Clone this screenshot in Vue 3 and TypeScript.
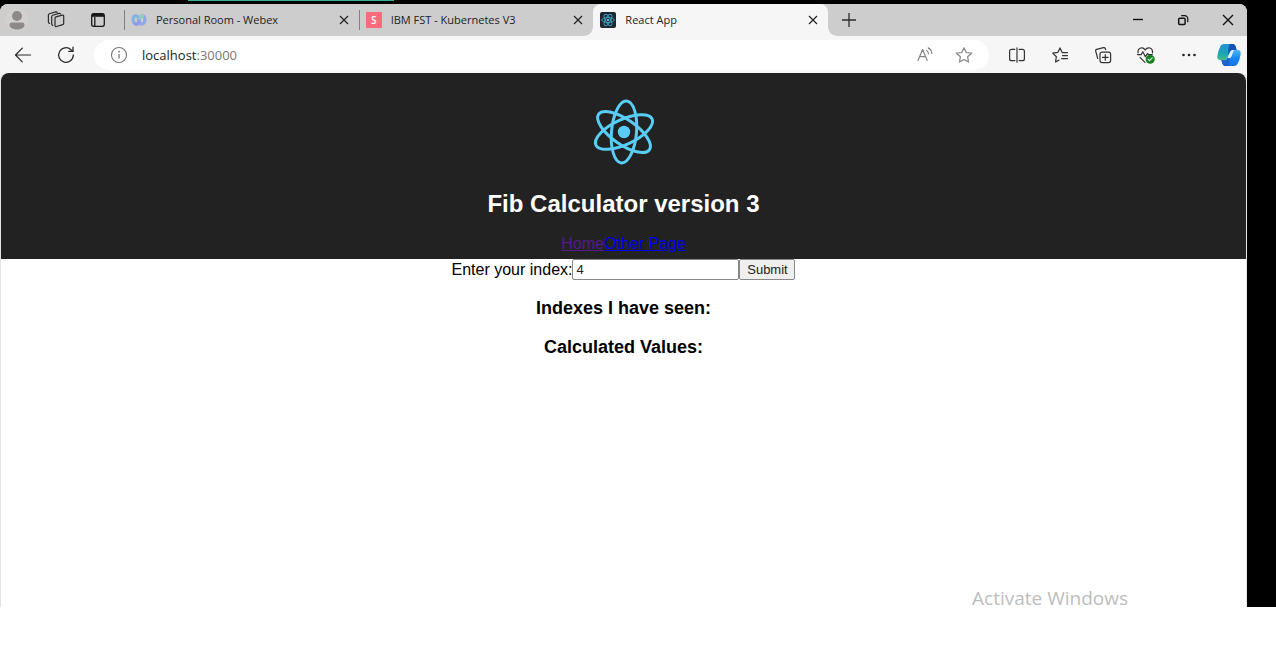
<script setup lang="ts">
import { ref } from 'vue'

interface Tab {
  title: string
  icon: 'webex' | 'skills' | 'react'
  active: boolean
}

const tabs: Tab[] = [
  { title: 'Personal Room - Webex', icon: 'webex', active: false },
  { title: 'IBM FST - Kubernetes V3', icon: 'skills', active: false },
  { title: 'React App', icon: 'react', active: true },
]

const index = ref('4')
</script>

<template>
  <div class="screen">
    <div class="share-bar"><span class="share-accent"></span></div>
    <div class="browser">
      <header class="tab-strip">
        <button class="avatar" aria-label="Profile">
          <svg width="22" height="22" viewBox="0 0 22 22">
            <circle cx="11" cy="11" r="11" fill="#d3d1d0" />
            <circle cx="11" cy="7" r="5" fill="#8d8988" />
            <path d="M3.500 16q0-2.500 2.500-2.500h10q2.500 0 2.500 2.500c0 3-4 4.500-7.500 4.500s-7.500-1.500-7.500-4.500z" fill="#8d8988" />
          </svg>
        </button>
        <button class="workspaces" aria-label="Workspaces">
          <svg width="18" height="18" viewBox="0 0 18 18" fill="none" stroke="#2b2b2b" stroke-width="1.2" stroke-linejoin="round" stroke-linecap="round">
            <path d="M8 7.200q0-1 1-1.300l6.200-1.700q1.500-.3 1.500 1.100v7q0 1-1 1.300l-6.200 1.900q-1.500.4-1.500-1z" />
            <path d="M5.800 14.300Q4.700 14 4.700 13V5.600q0-1.100 1-1.400l6.300-1.800q1-.2 1.500.4" />
            <path d="M2.500 12.500Q1.400 12.100 1.400 11V4.100q0-1.100 1-1.400l6.300-1.800q1-.2 1.500.4" />
          </svg>
        </button>
        <button class="tab-actions" aria-label="Tab actions">
          <svg width="16" height="16" viewBox="0 0 16 16" fill="none" stroke="#181818" stroke-width="1.3">
            <rect x="1.7" y="1.7" width="12.600" height="12.600" rx="2" />
            <path d="M2 3.300h12" stroke-width="3" />
            <path d="M4.800 5v9" />
          </svg>
        </button>

        <nav class="tabs" aria-label="Tabs">
          <div v-for="tab in tabs" :key="tab.title" class="tab" :class="{ active: tab.active }">
            <svg v-if="tab.icon === 'webex'" class="favicon" viewBox="0 0 16 16" fill="none" stroke-width="3.200" stroke-linecap="round">
              <ellipse cx="11" cy="8" rx="2.900" ry="4.200" stroke="#8fa8ea" transform="rotate(10 11 8)" />
              <ellipse cx="5" cy="8" rx="2.900" ry="4.200" stroke="#84b0e6" transform="rotate(-10 5 8)" />
              <path d="M9 6c.6-1.700 1.500-2.400 2.600-2.200" stroke="#8ed0b8" />
              <path d="M4 11.500c1.600 1.200 3 .6 3.800-1.700" stroke="#9299e6" />
            </svg>
            <span v-else-if="tab.icon === 'skills'" class="favicon skills">S</span>
            <svg v-else class="favicon" viewBox="0 0 16 16" fill="none" stroke="#3d9cbb">
              <rect width="16" height="16" rx="2" fill="#20252e" stroke="none" />
              <ellipse cx="8" cy="8" rx="6.300" ry="2.500" />
              <ellipse cx="8" cy="8" rx="6.300" ry="2.500" transform="rotate(60 8 8)" />
              <ellipse cx="8" cy="8" rx="6.300" ry="2.500" transform="rotate(120 8 8)" />
              <circle cx="8" cy="8" r="1.300" fill="#4fb6d4" stroke="none" />
            </svg>
            <span class="tab-title">{{ tab.title }}</span>
            <button class="tab-close" :aria-label="`Close ${tab.title}`">
              <svg width="10" height="10" viewBox="0 0 10 10"><path d="M1 1l8 8M9 1l-8 8" stroke="#222" stroke-width="1.2" /></svg>
            </button>
          </div>
        </nav>
        <button class="new-tab" aria-label="New tab">
          <svg width="14" height="14" viewBox="0 0 14 14"><path d="M7 0v14M0 7h14" stroke="#2b2b2b" stroke-width="1.3" /></svg>
        </button>

        <div class="window-controls">
          <button aria-label="Minimize">
            <svg width="12" height="12" viewBox="0 0 12 12"><path d="M1 5.500h10" stroke="#111" stroke-width="1.4" /></svg>
          </button>
          <button aria-label="Restore">
            <svg width="12" height="12" viewBox="0 0 12 12" fill="none" stroke="#111" stroke-width="1.5">
              <rect x="1.700" y="4.200" width="6.400" height="6.400" rx="1" />
              <path d="M4.200 1.700h3.600a3 3 0 0 1 3 3v3.600" stroke-width="1.2" />
            </svg>
          </button>
          <button aria-label="Close">
            <svg width="12" height="12" viewBox="0 0 12 12"><path d="M1 1l10 10M11 1l-10 10" stroke="#111" stroke-width="1.4" /></svg>
          </button>
        </div>
      </header>

      <div class="toolbar">
        <button class="tool" aria-label="Back">
          <svg width="18" height="18" viewBox="0 0 18 18" fill="none" stroke="#2b2b2b" stroke-width="1.2" stroke-linecap="round" stroke-linejoin="round">
            <path d="M16.500 9H1.500M8.300 2.200 1.500 9l6.800 6.800" />
          </svg>
        </button>
        <button class="tool" aria-label="Refresh">
          <svg width="18" height="18" viewBox="0 0 18 18" fill="none" stroke="#2b2b2b" stroke-width="1.3" stroke-linecap="round" stroke-linejoin="round">
            <path d="M16.300 9A7.300 7.300 0 1 1 14 3.700L15.700 5.200" />
            <path d="M16 1.200v4.200h-4.200" />
          </svg>
        </button>
        <div class="address-bar">
          <svg class="info" width="18" height="18" viewBox="0 0 18 18" fill="none" stroke="#777" stroke-width="1.1">
            <circle cx="9" cy="9" r="7.500" />
            <path d="M9 8v4.500" stroke-width="1.3" />
            <circle cx="9" cy="5.700" r=".9" fill="#777" stroke="none" />
          </svg>
          <span class="url">localhost<span class="port">:30000</span></span>
          <button class="tool" aria-label="Read aloud">
            <svg width="18" height="18" viewBox="0 0 18 18" fill="none" stroke="#858585" stroke-width="1.2" stroke-linecap="round" stroke-linejoin="round">
              <path d="M2 14.500 6.600 3.500 11.200 14.500M3.600 10.700h6" />
              <path d="M10.500 4.600q1.800 1 2 3.200M12.200 1.900q3.300 1.700 3.600 5.600" />
            </svg>
          </button>
          <button class="tool" aria-label="Add to favorites">
            <svg width="18" height="18" viewBox="0 0 18 18" fill="none" stroke="#858585" stroke-width="1.2" stroke-linejoin="round">
              <path d="M9 1.800 11.200 6.500 16.500 7.200 12.600 10.800 13.600 16.100 9 13.500 4.400 16.100 5.400 10.800 1.500 7.200 6.800 6.500z" />
            </svg>
          </button>
        </div>
        <div class="tools">
          <button class="tool" aria-label="Split screen">
            <svg width="18" height="18" viewBox="0 0 18 18" fill="none" stroke="#333" stroke-width="1.2" stroke-linecap="round">
              <path d="M6.800 3.300H3.600a2 2 0 0 0-2 2v7.400a2 2 0 0 0 2 2h3.200M11.200 3.300h3.200a2 2 0 0 1 2 2v7.400a2 2 0 0 1-2 2h-3.200M9 1.800v14.400" />
            </svg>
          </button>
          <button class="tool" aria-label="Favorites">
            <svg width="18" height="18" viewBox="0 0 18 18" fill="none" stroke="#333" stroke-width="1.2" stroke-linecap="round" stroke-linejoin="round">
              <path d="M16.500 6.600h-5.300L9 1.900 6.800 6.400 1.700 7.100 5.400 10.700 4.500 16 8 14.100" />
              <path d="M11.500 9.600h5M10.500 12.600h6" />
            </svg>
          </button>
          <button class="tool" aria-label="Collections">
            <svg width="18" height="18" viewBox="0 0 18 18" fill="none" stroke="#333" stroke-width="1.2" stroke-linecap="round" stroke-linejoin="round">
              <path d="M3.700 12.500 1.700 5.200q-.4-1.400 1-1.800l6.800-1.800q1.300-.3 1.800.9l.3 1.200" />
              <rect x="6" y="6.200" width="10.600" height="10.400" rx="2" />
              <path d="M11.300 8.600v5.600M8.500 11.400h5.600" />
            </svg>
          </button>
          <button class="tool" aria-label="Browser essentials">
            <svg width="20" height="18" viewBox="0 0 20 18" fill="none" stroke="#333" stroke-width="1.2" stroke-linecap="round" stroke-linejoin="round">
              <path d="M2 6.800C1.700 1.400 7 .4 9.200 4 11.500.3 17 1.500 16.500 6.800" />
              <path d="M1.500 8.600h3.700l1.600-2.800 2.600 5 2-3.200 1.300 1h3.500M4 11.300l5 5" />
              <circle cx="14.200" cy="13.200" r="4.500" fill="#15801f" stroke="none" />
              <path d="m12.200 13.400 1.300 1.300 2.800-2.800" stroke="#d8f0d8" />
            </svg>
          </button>
          <button class="tool" aria-label="Settings and more">
            <svg width="18" height="18" viewBox="0 0 18 18" fill="#222"><circle cx="3.500" cy="9" r="1.300" /><circle cx="9" cy="9" r="1.300" /><circle cx="14.500" cy="9" r="1.300" /></svg>
          </button>
        </div>
        <button class="copilot" aria-label="Copilot">
          <svg width="24" height="22" viewBox="0 0 24 22">
            <defs>
              <linearGradient id="leaf-left" x1="0" y1="0" x2="0" y2="1">
                <stop offset="0" stop-color="#2590d4" /><stop offset=".6" stop-color="#1ba5b8" /><stop offset="1" stop-color="#46bd86" />
              </linearGradient>
              <linearGradient id="leaf-right" x1="0" y1="0" x2="0" y2="1">
                <stop offset="0" stop-color="#4db5f5" /><stop offset=".5" stop-color="#1688f4" /><stop offset="1" stop-color="#1673dc" />
              </linearGradient>
            </defs>
            <path d="M7 0h9q2 .2 2.700 2.600L19.600 6h-3.800q-2.200.1-2.900 2.300L10.700 14q-.8 2.200-3 2.200H3.200Q0 15.900.3 12.300 1.300 6 3.400 2.300 4.600 0 7 0z" fill="url(#leaf-left)" />
            <path d="M12.500 0H16q2 .2 2.700 2.600L19.600 6h-3.800q-2.200.1-2.900 2.300L11.800 11q-1.300-4.500.7-11z" fill="#1552b5" />
            <path d="M17 22H8q-2-.2-2.700-2.600l-.9-3.200h3.300q2.200 0 3-2.200h1.600q1.700-.2 2.400-2.300L16.500 6h4.300q3.200.3 2.900 3.900-1 6.300-3.100 9.900Q19.400 22 17 22z" fill="url(#leaf-right)" />
            <path d="M11.500 22H8q-2-.2-2.700-2.600l-.9-3.200h3.300q2.200 0 3-2.200h1.600q1.200 4-.8 8z" fill="#1a62cf" />
            <path d="M13 8.300q.7-2 2.800-2.300h1L14.500 12.100q-.7 1.800-2.300 1.900h-1.500z" fill="#e2eefa" />
          </svg>
        </button>
      </div>

      <main class="page">
        <div class="app-header">
          <svg class="logo" viewBox="0 0 80 80" fill="none" stroke="#58cdf5" stroke-width="3" role="img" aria-label="React logo">
            <g transform="rotate(5 40 40)">
              <ellipse cx="40" cy="40" rx="12.500" ry="31" />
              <ellipse cx="40" cy="40" rx="12.500" ry="31" transform="rotate(60 40 40)" />
              <ellipse cx="40" cy="40" rx="12.500" ry="31" transform="rotate(120 40 40)" />
            </g>
            <circle cx="40" cy="40" r="6.200" fill="#58cdf5" stroke="none" />
          </svg>
          <h1>Fib Calculator version 3</h1>
          <nav class="links"><a class="visited" href="#home">Home</a><a href="#other">Other Page</a></nav>
        </div>
        <form class="index-form" @submit.prevent>
          <label for="index">Enter your index:</label>
          <input id="index" v-model="index" type="text" />
          <button type="submit">Submit</button>
        </form>
        <h3>Indexes I have seen:</h3>
        <h3>Calculated Values:</h3>
        <p class="watermark">Activate Windows</p>
      </main>
    </div>
  </div>
</template>

<style>
body {
  margin: 0;
  background: #fff;
}
</style>

<style scoped>
.screen {
  box-sizing: border-box;
  min-height: calc(100vh - 41px);
  padding-right: 29px;
  display: flex;
  flex-direction: column;
  background: #000;
  font-family: "Open Sans", "Noto Sans", sans-serif;
}
.share-bar {
  height: 4px;
  padding-left: 188px;
}
.share-accent {
  display: block;
  width: 206px;
  height: 1px;
  background: #35b292;
}
.browser {
  flex: 1;
  display: flex;
  flex-direction: column;
  background: #f6f6f6;
  border-radius: 8px 8px 0 0;
}
button {
  font: inherit;
}
.tab-strip button,
.toolbar button {
  display: flex;
  align-items: center;
  justify-content: center;
  flex: none;
  padding: 0;
  border: 0;
  background: none;
}
.tab-strip {
  display: flex;
  align-items: center;
  height: 32px;
  border-radius: 8px 8px 0 0;
  background: #cdcdcd;
}
.avatar {
  width: 34px;
}
.workspaces {
  width: 44px;
}
.tab-actions {
  width: 40px;
}
.tabs {
  display: flex;
  flex: 0 1 704px;
  margin-left: 6px;
  align-self: stretch;
}
.tab {
  position: relative;
  box-sizing: border-box;
  flex: 1;
  min-width: 0;
  display: flex;
  align-items: center;
  padding: 0 10px 0 7px;
  font-size: 11px;
  line-height: 16px;
  color: #222;
}
.tab:not(.active)::before {
  content: "";
  position: absolute;
  left: 0;
  top: 6px;
  width: 1px;
  height: 20px;
  background: #808080;
}
.tab.active {
  background: #f6f6f6;
  border-radius: 8px 8px 0 0;
}
.tab.active::before,
.tab.active::after {
  content: "";
  position: absolute;
  bottom: 0;
  width: 8px;
  height: 8px;
}
.tab.active::before {
  right: 100%;
  background: radial-gradient(circle at 0 0, #cdcdcd 7px, #f6f6f6 8px);
}
.tab.active::after {
  left: 100%;
  background: radial-gradient(circle at 100% 0, #cdcdcd 7px, #f6f6f6 8px);
}
.favicon {
  flex: none;
  width: 16px;
  height: 16px;
}
.skills {
  background: #f76b7c;
  color: #fff;
  font-size: 10px;
  font-weight: 600;
  text-align: center;
}
.tab-title {
  flex: 1;
  min-width: 0;
  margin-left: 9px;
  white-space: nowrap;
  overflow: hidden;
}
.new-tab {
  width: 42px;
}
.window-controls {
  display: flex;
  margin-left: auto;
  margin-right: -3px;
}
.window-controls button {
  width: 45px;
}
.toolbar {
  display: flex;
  align-items: center;
  height: 37px;
  padding-left: 14px;
}
.toolbar > .tool:nth-child(2) {
  margin: 0 19px 0 25px;
}
.address-bar {
  box-sizing: border-box;
  flex: 1;
  display: flex;
  align-items: center;
  height: 30px;
  padding: 0 16px;
  border-radius: 15px;
  background: #fff;
}
.address-bar .tool {
  margin-left: 21px;
}
.url {
  flex: 1;
  margin-left: 14px;
  font-size: 13px;
  line-height: 20px;
  color: #222;
}
.port {
  color: #777;
}
.tools {
  display: flex;
  margin-left: 6px;
}
.tools .tool {
  width: 43px;
}
.copilot {
  width: 37px;
}
.page {
  position: relative;
  flex: 1;
  border: 1px solid #e4e4e4;
  border-width: 0 1px;
  border-radius: 8px 8px 0 0;
  background: #fff;
  text-align: center;
  font-family: "Liberation Sans", Arial, sans-serif;
  font-size: 16px;
  line-height: 18px;
  color: #000;
}
.app-header {
  padding: 19px 0 7px;
  border-radius: 8px 8px 0 0;
  background: #222;
}
.logo {
  display: block;
  width: 80px;
  height: 80px;
  margin: 0 auto;
}
h1 {
  margin: 18px 0;
  font-size: 24px;
  line-height: 28px;
  color: #fff;
}
.links {
  line-height: 16px;
}
.links a {
  color: #0000ee;
}
.links .visited {
  color: #551a8b;
}
.index-form {
  display: flex;
  align-items: center;
  justify-content: center;
}
.index-form input {
  box-sizing: border-box;
  width: 167px;
  height: 21px;
  padding: 1px 3px;
  border: 1px solid #888;
  border-radius: 2px;
  font: 13px "Liberation Sans", Arial, sans-serif;
  color: #222;
}
.index-form button {
  box-sizing: border-box;
  width: 56px;
  height: 21px;
  padding: 0;
  border: 1px solid #888;
  border-radius: 2px;
  background: #efefef;
  font-size: 13px;
  line-height: 16px;
  color: #222;
}
h3 {
  margin: 18px 0;
  font-size: 18px;
  line-height: 21px;
}
.watermark {
  position: absolute;
  right: 118px;
  bottom: -4px;
  margin: 0;
  font-family: "Open Sans", "Noto Sans", sans-serif;
  font-size: 19px;
  line-height: 26px;
  color: #bdbdbd;
}
</style>
